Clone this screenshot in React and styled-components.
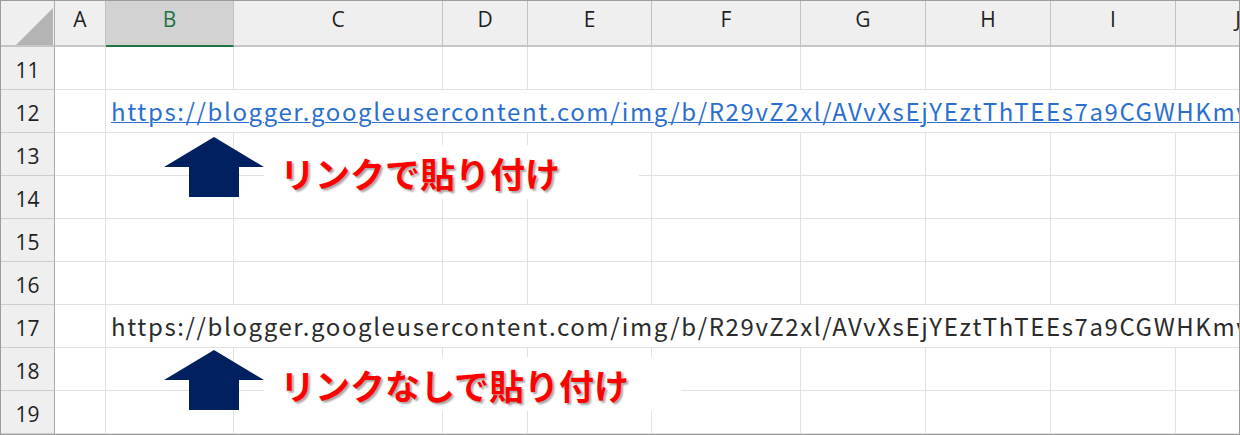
import React from "react";
import styled, { createGlobalStyle } from "styled-components";

const GlobalStyle = createGlobalStyle`
  html, body { margin: 0; padding: 0; background: #ffffff; }
  * { box-sizing: border-box; }
`;

const Frame = styled.div`
  position: relative;
  width: 1240px;
  height: 435px;
  border: 1px solid #9c9c9c;
  overflow: hidden;
  background: #ffffff;
`;

const Grid = styled.div`
  display: grid;
  grid-template-columns: 54px 51px 128px 209px 85px 124px 149px 125px 125px 125px 125px;
  grid-template-rows: 46px repeat(9, 43px);
  width: 1300px;
`;

const Corner = styled.div`
  position: relative;
  background: #efefef;
  border-right: 1px solid #ababab;
  border-bottom: 2px solid #c6c6c6;
`;

const CornerTriangle = styled.svg`
  position: absolute;
  left: 14px;
  top: 7px;
`;

const ColHeader = styled.div`
  display: flex;
  align-items: center;
  justify-content: center;
  padding-bottom: 8px;
  background: ${(p) => (p.$selected ? "#d2d2d2" : "#efefef")};
  color: ${(p) => (p.$selected ? "#217346" : "#1f1f1f")};
  border-right: 1px solid #c2c2c2;
  border-bottom: 2px solid ${(p) => (p.$selected ? "#217346" : "#c6c6c6")};
  font-family: "Open Sans", "Noto Sans", sans-serif;
  font-size: 21px;
`;

const RowHeader = styled.div`
  display: flex;
  align-items: center;
  justify-content: center;
  padding-top: 4px;
  background: #efefef;
  color: #1f1f1f;
  border-right: 1px solid #a9a9a9;
  border-bottom: 1px solid #cdcdcd;
  font-family: "Open Sans", "Noto Sans", sans-serif;
  font-size: 21px;
`;

const Cell = styled.div`
  border-right: 1px solid #e1e1e1;
  border-bottom: 1px solid #e1e1e1;
`;

const UrlCell = styled.div`
  grid-column: 3 / -1;
  display: flex;
  align-items: flex-end;
  padding: 0 0 9px 5px;
  border-bottom: 1px solid #e1e1e1;
  white-space: nowrap;
  overflow: hidden;
  font-family: "Noto Sans CJK JP", "Noto Sans", sans-serif;
  font-size: 24px;
  letter-spacing: 1.6px;
  line-height: 1;
  color: ${(p) => (p.$link ? "#2a6fcf" : "#2b2b2b")};
  text-decoration: ${(p) => (p.$link ? "underline" : "none")};
  text-decoration-thickness: 1px;
  text-underline-offset: 1px;
`;

const Arrow = styled.svg`
  position: absolute;
  left: 162px;
  top: ${(p) => p.$top}px;
`;

const Callout = styled.div`
  position: absolute;
  left: 263px;
  top: ${(p) => p.$top}px;
  width: ${(p) => p.$width}px;
  height: 54px;
  display: flex;
  align-items: center;
  padding-left: 16px;
  background: #ffffff;
  color: #ff0000;
  font-family: "Noto Sans CJK JP", sans-serif;
  font-weight: 700;
  font-size: 35px;
  line-height: 1;
  white-space: nowrap;
  text-shadow: 2px 2px 2px rgba(0, 0, 0, 0.35);
`;

const columns = ["A", "B", "C", "D", "E", "F", "G", "H", "I", "J"];
const rows = [11, 12, 13, 14, 15, 16, 17, 18, 19];
const URL = "https://blogger.googleusercontent.com/img/b/R29vZ2xl/AVvXsEjYEztThTEEs7a9CGWHKmv";

function ArrowShape({ top }) {
  return (
    <Arrow $top={top} width="102" height="62" viewBox="0 0 102 62">
      <polygon points="51,0 101,30 76,30 76,60 26,60 26,30 1,30" fill="#002060" />
    </Arrow>
  );
}

export default function App() {
  return (
    <>
      <GlobalStyle />
      <Frame>
        <Grid>
          <Corner>
            <CornerTriangle width="40" height="38" viewBox="0 0 40 38">
              <polygon points="1,37 38,37 38,0" fill="#b4b4b4" />
            </CornerTriangle>
          </Corner>
          {columns.map((c) => (
            <ColHeader key={c} $selected={c === "B"}>{c}</ColHeader>
          ))}
          {rows.map((r) => (
            <React.Fragment key={r}>
              <RowHeader>{r}</RowHeader>
              <Cell />
              {r === 12 || r === 17 ? (
                <UrlCell $link={r === 12}>{URL}</UrlCell>
              ) : (
                columns.slice(1).map((c) => <Cell key={c} />)
              )}
            </React.Fragment>
          ))}
        </Grid>
        <ArrowShape top={136} />
        <ArrowShape top={349} />
        <Callout $top={144} $width={375}>リンクで貼り付け</Callout>
        <Callout $top={356} $width={417}>リンクなしで貼り付け</Callout>
      </Frame>
    </>
  );
}
